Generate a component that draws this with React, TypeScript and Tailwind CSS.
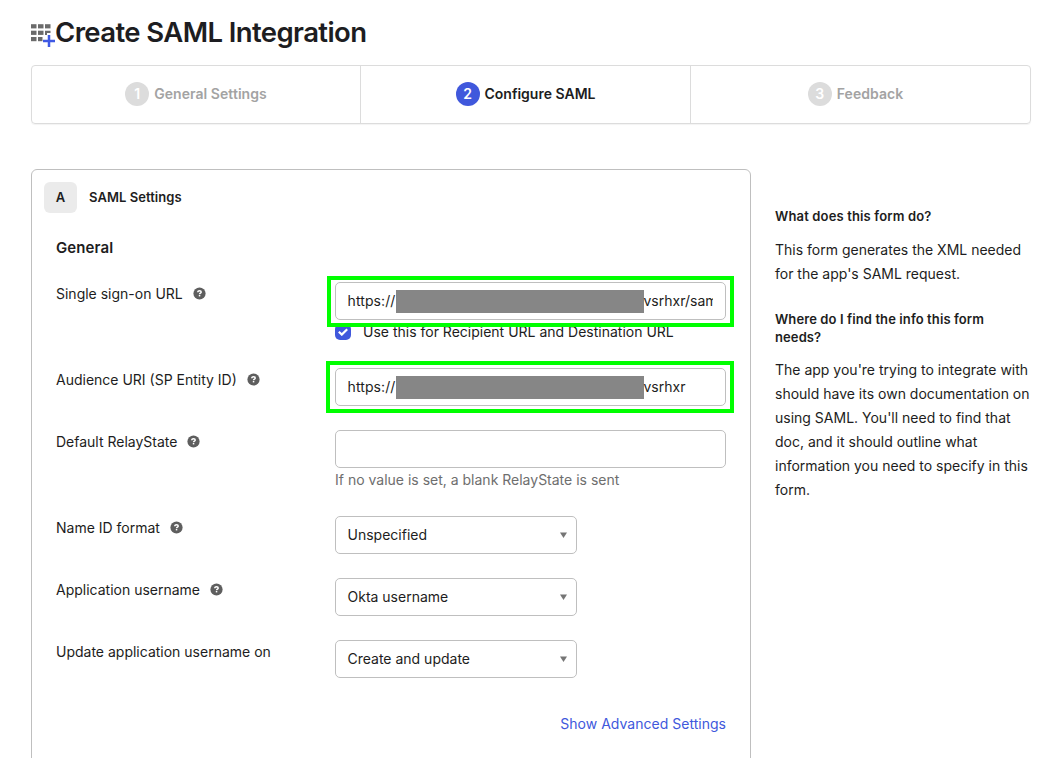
import type { ReactNode } from "react";

function HelpIcon() {
  return (
    <svg width="13" height="13" viewBox="0 0 13 13" className="mt-px shrink-0" aria-hidden="true">
      <circle cx="6.5" cy="6.5" r="6.1" fill="#5e5e5e" />
      <path
        d="M4.800 5.300C4.800 4.300 5.500 3.800 6.500 3.800s1.700.500 1.700 1.300c0 1.100-1.600 1-1.600 2.200"
        fill="none"
        stroke="#fff"
        strokeWidth="1.500"
      />
      <rect x="5.800" y="8" width="1.500" height="1.400" fill="#fff" />
    </svg>
  );
}

function AppGridIcon() {
  return (
    <svg width="24" height="24" viewBox="0 0 24 24" className="shrink-0" aria-hidden="true">
      <g fill="#6b6b6b">
        <rect x="0" y="1.200" width="5.500" height="4.200" />
        <rect x="7" y="1.200" width="5.500" height="4.200" />
        <rect x="14" y="1.200" width="5.500" height="4.200" />
        <rect x="0" y="7.700" width="5.500" height="4.200" />
        <rect x="7" y="7.700" width="5.500" height="4.200" />
        <path d="M14 7.700h5.500v2.300h-3.500v1.900H14z" />
        <rect x="0" y="14" width="5.500" height="4.200" />
        <path d="M7 14h4.500v4.200H7z" />
      </g>
      <path d="M18 12v12M12 18h12" stroke="#3f59e4" strokeWidth="2.500" />
    </svg>
  );
}

interface StepProps {
  n: number;
  title: string;
  active?: boolean;
  className: string;
}

function Step({ n, title, active = false, className }: StepProps) {
  return (
    <div className={`flex items-center justify-center gap-[5px] pb-[2px] text-[14px] font-semibold ${className}`}>
      <span
        className={`flex h-6 w-6 items-center justify-center rounded-full text-white ${active ? "bg-[#4058dc]" : "bg-[#dcdcdc]"}`}
      >
        {n}
      </span>
      <span className={active ? "text-[#1d1d21]" : "tracking-[0.05px] text-[#a3a3a3]"}>{title}</span>
    </div>
  );
}

function Row({ label, help = true, className = "", children }: { label: string; help?: boolean; className?: string; children: ReactNode }) {
  return (
    <div className={`flex items-start ${className}`}>
      <div className="-mt-px flex h-6 w-[279px] shrink-0 items-center gap-[10px]">
        <span>{label}</span>
        {help && <HelpIcon />}
      </div>
      <div className="relative min-w-0 flex-1">{children}</div>
    </div>
  );
}

function TextField({ end }: { end?: string }) {
  return (
    <div className="flex h-[38px] items-center rounded-[5px] border border-[#bfbfbf] bg-white pr-3 pl-[11.5px]">
      {end && (
        <div className="flex flex-1 items-center overflow-hidden whitespace-nowrap">
          <span className="w-[48.5px] shrink-0 pb-[2px] tracking-[0.1px]">https://</span>
          <span className="h-[23px] w-[247.5px] shrink-0 bg-[#868686]" />
          <span className="shrink-0 pb-[2px]">{end}</span>
        </div>
      )}
    </div>
  );
}

function Select({ value }: { value: string }) {
  return (
    <div className="flex h-[38px] w-[242px] items-center justify-between rounded-[5px] border border-[#bfbfbf] pr-[9px] pl-[11.5px]">
      <span className="pb-[2px]">{value}</span>
      <svg width="7" height="6" viewBox="0 0 7 6" aria-hidden="true">
        <path d="M0 0.500h7L3.500 6z" fill="#757575" />
      </svg>
    </div>
  );
}

export default function App() {
  return (
    <div className="h-[758px] overflow-hidden bg-white pl-[31px] font-['Inter',sans-serif] text-[14px] text-[#1d1d21]">
      <header className="flex h-[65px] items-start">
        <div className="pt-[23px]">
          <AppGridIcon />
        </div>
        <h1 className="pt-[14px] text-[27.5px] leading-9 font-[560] tracking-[-0.6px] whitespace-nowrap">Create SAML Integration</h1>
      </header>

      <nav className="flex h-[59px] w-[1000px] rounded-[4px] border border-[#dcdcdc] shadow-[0_1px_1px_rgba(0,0,0,0.05)]">
        <Step n={1} title="General Settings" className="w-[329px] border-r border-[#dcdcdc]" />
        <Step n={2} title="Configure SAML" active className="w-[330px] border-r border-[#dcdcdc]" />
        <Step n={3} title="Feedback" className="flex-1 pr-[10px]" />
      </nav>

      <div className="flex pt-[45px]">
        <section className="h-[620px] w-[720px] shrink-0 rounded-t-[6px] border border-[#bfbfbf] px-6">
          <div className="-ml-3 flex items-center gap-3 pt-3">
            <span className="flex h-[31px] w-[33px] items-center justify-center rounded-[6px] bg-[#ebebeb] text-[13px] font-semibold">A</span>
            <h2 className="text-[13px] font-semibold tracking-[0.06px]">SAML Settings</h2>
          </div>
          <h3 className="mt-[23px] text-[15px] leading-6 font-semibold tracking-[0.1px]">General</h3>

          <Row label="Single sign-on URL" className="mt-[22px] h-[86px]">
            <TextField end="vsrhxr/sam" />
            <div className="mt-1 flex h-6 items-start">
              <span className="flex h-4 w-4 items-center justify-center rounded-[5px] bg-[#4058dc]">
                <svg width="10" height="8" viewBox="0 0 10 8" aria-hidden="true">
                  <path d="M0.800 3.800l3 2.800L9.200 1.200" fill="none" stroke="#fff" strokeWidth="2.200" />
                </svg>
              </span>
              <span className="ml-3 leading-4">Use this for Recipient URL and Destination URL</span>
            </div>
            <div className="absolute -top-[6px] -left-2 h-[51px] w-[407px] border-4 border-[#00ff00]" />
          </Row>
          <Row label="Audience URI (SP Entity ID)" className="h-[62px]">
            <TextField end="vsrhxr" />
            <div className="absolute -top-[7px] -left-[9px] h-[52px] w-[408px] border-4 border-[#00ff00]" />
          </Row>
          <Row label="Default RelayState" className="h-[86px]">
            <TextField />
            <p className="leading-6 text-[#6e6e6e]">If no value is set, a blank RelayState is sent</p>
          </Row>
          <Row label="Name ID format" className="h-[62px]">
            <Select value="Unspecified" />
          </Row>
          <Row label="Application username" className="h-[62px]">
            <Select value="Okta username" />
          </Row>
          <Row label="Update application username on" help={false} className="h-[72px]">
            <Select value="Create and update" />
          </Row>
          <div className="text-right leading-6 tracking-[0.02px] text-[#4058dc]">Show Advanced Settings</div>
        </section>

        <aside className="w-[290px] pt-[38px] pl-6">
          <h4 className="text-[13px] leading-[18px] font-semibold tracking-[0.15px]">What does this form do?</h4>
          <p className="mt-[13px] leading-6">
            This form generates the XML needed
            <br />
            for the app's SAML request.
          </p>
          <h4 className="mt-6 text-[13px] leading-[18px] font-semibold tracking-[0.1px]">
            Where do I find the info this form
            <br />
            needs?
          </h4>
          <p className="mt-3 leading-6 whitespace-nowrap">
            The app you're trying to integrate with
            <br />
            should have its own documentation on
            <br />
            using SAML. You'll need to find that
            <br />
            doc, and it should outline what
            <br />
            information you need to specify in this
            <br />
            form.
          </p>
        </aside>
      </div>
    </div>
  );
}
